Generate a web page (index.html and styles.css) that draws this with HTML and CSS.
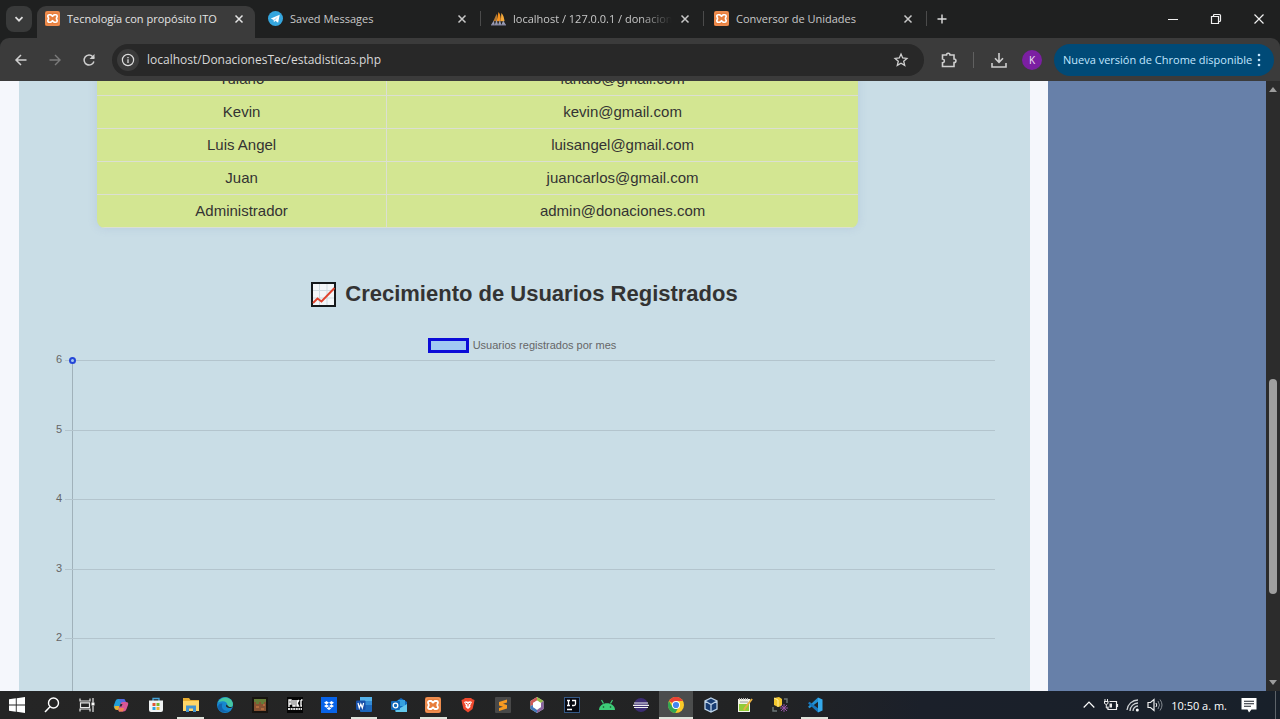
FILE: index.html
```html
<!DOCTYPE html>
<html lang="es">
<head>
<meta charset="utf-8">
<title>Tecnología con propósito ITO</title>
<link rel="stylesheet" href="styles.css">
</head>
<body>
<svg class="defs" aria-hidden="true">
  <symbol id="xampp" viewBox="0 0 16 16">
    <rect width="16" height="16" rx="2" fill="#e87e3c"/>
    <rect x="1" y="1" width="14" height="14" rx="2" fill="none" stroke="#f5a26b" stroke-width=".8"/>
    <path d="M4.500 4h1.700L8 5.500 9.800 4h1.700q1.500 0 1.500 1.500c0 1-.8 1.500-.8 2.500s.8 1.500.8 2.500q0 1.500-1.500 1.500H9.800L8 10.500 6.200 12H4.500Q3 12 3 10.500c0-1 .8-1.500.8-2.500S3 6.500 3 5.500Q3 4 4.500 4z" fill="none" stroke="#fff" stroke-width="1.800"/>
  </symbol>
  <symbol id="close" viewBox="0 0 10 10">
    <path d="M1.500 1.500l7 7M8.500 1.500l-7 7" fill="none" stroke="currentColor" stroke-width="1.500"/>
  </symbol>
</svg>

<header class="tabstrip">
  <button class="tab-search" aria-label="Buscar pestañas"><svg width="10" height="10" viewBox="0 0 10 10"><path d="M1.500 3.200L5 6.700l3.500-3.500" fill="none" stroke="currentColor" stroke-width="1.700"/></svg></button>
  <nav class="tabs">
    <div class="tab tab-active">
      <svg class="favicon"><use href="#xampp"/></svg>
      <span class="tab-title">Tecnología con propósito ITO</span>
      <button class="tab-close" aria-label="Cerrar"><svg width="10" height="10"><use href="#close"/></svg></button>
    </div>
    <div class="tab">
      <svg class="favicon" viewBox="0 0 16 16"><circle cx="8" cy="8" r="8" fill="#35a6de"/><path d="M3 8l9.500-4-1.700 8.500-3-2-1.500 1.500-.3-2.500z" fill="#fff"/><path d="M6 9.500l4.500-3.700-3 4.300z" fill="#a9d3ee"/></svg>
      <span class="tab-title">Saved Messages</span>
      <button class="tab-close" aria-label="Cerrar"><svg width="10" height="10"><use href="#close"/></svg></button>
    </div>
    <div class="tab tab-divided">
      <svg class="favicon" viewBox="0 0 16 16"><path d="M6 11L8 1c2 2 2.500 6 2.500 10z" fill="#f7931e"/><path d="M10.500 11L11 2c2.500 2 3 6 3.500 9z" fill="#f4a93a"/><path d="M2.500 11L6 3c.8 3 .4 6 0 8z" fill="#b7792f"/><path d="M0 15l3-5 1 5 2-6 1.500 6 2-6 1.500 6 2-5 3 5z" fill="#9a9cb4"/><path d="M0 15h16" stroke="#787a94"/></svg>
      <span class="tab-title tab-title-faded">localhost / 127.0.0.1 / donaciones</span>
      <button class="tab-close" aria-label="Cerrar"><svg width="10" height="10"><use href="#close"/></svg></button>
    </div>
    <div class="tab tab-divided">
      <svg class="favicon"><use href="#xampp"/></svg>
      <span class="tab-title">Conversor de Unidades</span>
      <button class="tab-close" aria-label="Cerrar"><svg width="10" height="10"><use href="#close"/></svg></button>
    </div>
    <span class="tabs-end"></span>
  </nav>
  <button class="new-tab" aria-label="Nueva pestaña"><svg width="12" height="12" viewBox="0 0 12 12"><path d="M6 1.500v9M1.500 6h9" stroke="currentColor" stroke-width="1.400"/></svg></button>
  <div class="window-controls">
    <button aria-label="Minimizar"><svg width="12" height="12" viewBox="0 0 12 12"><path d="M1 6.500h10" stroke="currentColor"/></svg></button>
    <button aria-label="Restaurar"><svg width="12" height="12" viewBox="0 0 12 12"><path d="M1.500 3.500h7v7h-7zM3.500 3.500v-1q0-1 1-1h5q1 0 1 1v5q0 1-1 1h-1" fill="none" stroke="currentColor" stroke-width="1.200"/></svg></button>
    <button aria-label="Cerrar"><svg width="12" height="12" viewBox="0 0 12 12"><path d="M1.500 1.500l9 9M10.500 1.500l-9 9" stroke="currentColor" stroke-width="1.200"/></svg></button>
  </div>
</header>

<div class="toolbar">
  <div class="nav-buttons">
    <button aria-label="Atrás"><svg width="16" height="16" viewBox="0 0 16 16"><path d="M13.500 8H3M8 3L3 8l5 5" fill="none" stroke="#cfcfcf" stroke-width="1.500"/></svg></button>
    <button aria-label="Adelante"><svg width="16" height="16" viewBox="0 0 16 16"><path d="M2.500 8H13M8 3l5 5-5 5" fill="none" stroke="#7b7b7b" stroke-width="1.400"/></svg></button>
    <button aria-label="Recargar"><svg width="16" height="16" viewBox="0 0 16 16"><path d="M12.900 9.500A5 5 0 1 1 11.800 4.700L13 6" fill="none" stroke="#cfcfcf" stroke-width="1.500"/><path d="M13.500 2v5h-5z" fill="#cfcfcf"/></svg></button>
  </div>
  <div class="omnibox">
    <button class="site-info" aria-label="Información del sitio"><svg width="14" height="14" viewBox="0 0 14 14"><circle cx="7" cy="7" r="5.600" fill="none" stroke="currentColor" stroke-width="1.200"/><path d="M7 6.300v3.700M7 4v1.300" stroke="currentColor" stroke-width="1.300"/></svg></button>
    <input class="url" type="text" aria-label="Dirección" value="localhost/DonacionesTec/estadisticas.php">
    <button class="star" aria-label="Añadir a marcadores"><svg width="16" height="16" viewBox="0 0 16 16"><path d="M8 2.100l1.700 3.900 4.200.4-3.200 2.800 1 4.200L8 11.200l-3.700 2.200 1-4.200L2.100 6.400l4.200-.4z" fill="none" stroke="#d0d0d0" stroke-width="1.300"/></svg></button>
  </div>
  <button class="tool" aria-label="Extensiones"><svg width="18" height="18" viewBox="0 0 18 18"><path d="M2.500 4h4c0-2.400 3.500-2.400 3.500 0h4v4c2.600 0 2.600 3.500 0 3.500v4H2.500v-3.700c2.500-.3 2.500-3.500 0-3.800z" fill="none" stroke="#cfcfcf" stroke-width="1.600"/></svg></button>
  <span class="tool-divider"></span>
  <button class="tool" aria-label="Descargas"><svg width="18" height="18" viewBox="0 0 18 18"><path d="M9 2v9M5 7.300l4 4 4-4M2 12v4h14v-4" fill="none" stroke="#cfcfcf" stroke-width="1.600"/></svg></button>
  <button class="avatar" aria-label="Perfil">K</button>
  <button class="update">Nueva versión de Chrome disponible<svg width="4" height="14" viewBox="0 0 4 14"><g fill="currentColor"><circle cx="2" cy="2" r="1.300"/><circle cx="2" cy="7" r="1.300"/><circle cx="2" cy="12" r="1.300"/></g></svg></button>
</div>

<div class="viewport">
  <div class="page">
    <main class="content">
      <table class="users">
        <tbody>
          <tr><td>Tulano</td><td>fanalo@gmail.com</td></tr>
          <tr><td>Kevin</td><td>kevin@gmail.com</td></tr>
          <tr><td>Luis Angel</td><td>luisangel@gmail.com</td></tr>
          <tr><td>Juan</td><td>juancarlos@gmail.com</td></tr>
          <tr><td>Administrador</td><td>admin@donaciones.com</td></tr>
        </tbody>
      </table>
      <h2 class="heading">
        <svg width="25" height="25" viewBox="0 0 25 25" aria-hidden="true"><rect x="1" y="1" width="23" height="23" fill="#f3f6f8" stroke="#15191b" stroke-width="2"/><path d="M8.500 2v21M16 2v21M2 8.500h21M2 16h21" stroke="#cfdbe1"/><path d="M2 21l4.500-4.500 4 3L23.500 6" fill="none" stroke="#e0442e" stroke-width="2"/></svg>
        Crecimiento de Usuarios Registrados
      </h2>
      <figure class="chart">
        <figcaption class="legend"><span class="swatch"></span>Usuarios registrados por mes</figcaption>
        <div class="plot">
          <ol class="ticks">
            <li><span>6</span></li>
            <li><span>5</span></li>
            <li><span>4</span></li>
            <li><span>3</span></li>
            <li><span>2</span></li>
          </ol>
          <span class="point"></span>
        </div>
      </figure>
    </main>
    <aside class="side"></aside>
  </div>
  <div class="scrollbar">
    <svg width="8" height="5" viewBox="0 0 8 5"><path d="M0 5l4-5 4 5z" fill="#9d9d9d"/></svg>
    <div class="track"><div class="thumb"></div></div>
    <svg width="8" height="5" viewBox="0 0 8 5"><path d="M0 0l4 5 4-5z" fill="#9d9d9d"/></svg>
  </div>
</div>

<footer class="taskbar">
  <div class="apps">
    <button aria-label="Inicio"><svg viewBox="0 0 16 16"><path d="M0 2.300l6.800-1v6.300H0zM7.700 1.200L16 0v7.600H7.700zM0 8.400h6.800v6.300l-6.800-1zM7.700 8.400H16V16l-8.300-1.200z" fill="#fff"/></svg></button>
    <button aria-label="Buscar"><svg viewBox="0 0 16 16"><circle cx="9.500" cy="6" r="5" fill="none" stroke="#fff" stroke-width="1.400"/><path d="M6 9.700L1 15" stroke="#fff" stroke-width="1.500"/></svg></button>
    <button aria-label="Vista de tareas"><svg viewBox="0 0 16 16"><path d="M1 1.500v2.500h10V1.500M1.500 5.800h9v4.700h-9zM1 14.500V12h10v2.500M14 1v4.500M14 9v6" fill="none" stroke="#e8e8e8" stroke-width="1.200"/><path d="M12.500 5.500h3v3h-3z" fill="#fff"/></svg></button>
    <button aria-label="Copilot"><svg viewBox="0 0 16 16"><path d="M5 2h5q2 0 2 2l1 2H8L6 12H3q-3-1-2-4l1.500-4q.7-2 2.500-2z" fill="#239ed6"/><path d="M6 2h4.500q1.500 0 2 2L13 6H9q-1.500 0-2-1.500z" fill="#5368df"/><path d="M1.500 9h5l-1 4H4q-3 0-2.500-4z" fill="#e5b333"/><path d="M13 5q3 0 2 3l-1.500 4q-.8 2.500-3 2.500H6q-1-1-.2-3L8 6q.5-1 2-1z" fill="#d95696"/><path d="M6 11h5l-1 3.500H6q-1-1 0-3.500z" fill="#ee8353"/><path d="M7.500 7h2L8.500 9.500h-2z" fill="#272a35"/></svg></button>
    <button aria-label="Microsoft Store"><svg viewBox="0 0 16 16"><path d="M5 4V1.500h6V4" fill="none" stroke="#46a5d9" stroke-width="1.300"/><path d="M1 3.500h14V13q0 2-2 2H3q-2 0-2-2z" fill="#f0f3f4"/><path d="M4.500 6h3v3h-3z" fill="#e05537"/><path d="M8.500 6h3v3h-3z" fill="#79b530"/><path d="M4.500 10h3v3h-3z" fill="#2da2dd"/><path d="M8.500 10h3v3h-3z" fill="#eeb52d"/></svg></button>
    <button class="open" aria-label="Explorador"><svg viewBox="0 0 16 16"><path d="M0 1h6l1.500 2H16v4H0z" fill="#e8ad31"/><path d="M0 4h16v10H0z" fill="#ffd668"/><path d="M3 15V8.500h10V15h-3v-3.500H6V15z" fill="#4494d0"/></svg></button>
    <button aria-label="Edge"><svg viewBox="0 0 16 16"><circle cx="8" cy="8" r="8" fill="#1688cf"/><path d="M1 5.500C4-2 15-1 16 7c0 4-5 4.500-6.500 3C12 7 9 4 5.500 4.200 3 4.300 1.500 5 1 5.500z" fill="#45c7a3"/><path d="M5.500 6.500c-2 4 1 8.500 7.500 7C7 17 1 14.500 1 10c0-2.500 2-4 4.500-3.500z" fill="#1264ad"/><path d="M9.500 10c-1-1-.3-2 .2-2.500 1.500 2 3 3.500 5.800 2-.8 1.500-4 2.500-6 .5z" fill="#202428"/></svg></button>
    <button aria-label="Minecraft"><svg viewBox="0 0 16 16"><rect width="16" height="16" fill="#17130f"/><rect x="2" y="2" width="12" height="12" fill="#875333"/><path d="M2 2h12v3h-2v2h-3V5H7v2H4V5H2z" fill="#657c38"/><path d="M4 9h3v2H4zM9 11h3v2H9zM11 7h2v2h-2z" fill="#b26a3c"/></svg></button>
    <button aria-label="PUBG"><svg viewBox="0 0 16 16"><rect width="16" height="16" fill="#050505"/><path d="M2 10V3h2v4H2M6 3v6h2V3M10 3v6h1.500L10 6l2-3M14 3v6h1M14 3h1.500" fill="none" stroke="#fff" stroke-width="1.400"/><path d="M1 12h14" stroke="#ddd" stroke-width="1.800" stroke-dasharray="2 .6"/></svg></button>
    <button aria-label="Dropbox"><svg viewBox="0 0 16 16"><rect width="16" height="16" fill="#0863e8"/><path d="M5.500 4L8 5.700 5.500 7.400 3 5.700zM10.500 4L13 5.700l-2.500 1.700L8 5.700zM5.500 7.400L8 9.100l-2.500 1.700L3 9.100zM10.500 7.400L13 9.100l-2.500 1.700L8 9.100zM8 10l2.300 1.500L8 13l-2.300-1.500z" fill="#fff"/></svg></button>
    <button class="open" aria-label="Word"><svg viewBox="0 0 16 16"><rect x="4" width="12" height="15" rx="1" fill="#1c67bd"/><path d="M4 0h12v4H4z" fill="#55b1e8"/><path d="M4 4h12v4H4z" fill="#338bd5"/><rect y="3.500" width="9.500" height="9.500" rx="1" fill="#174fa8"/><path d="M2 6l1.300 5L4.800 7l1.500 4L7.600 6" fill="none" stroke="#fff" stroke-width="1.200"/></svg></button>
    <button aria-label="Outlook"><svg viewBox="0 0 16 16"><path d="M4 5l6-4 6 4v9H4z" fill="#126bc0"/><path d="M7 3h7v6H7z" fill="#35a1df"/><path d="M4 14L16 7v8H5z" fill="#63c8ec"/><rect y="4" width="9" height="9" rx="1" fill="#1169b9"/><circle cx="4.500" cy="8.500" r="2.300" fill="none" stroke="#fff" stroke-width="1.300"/></svg></button>
    <button class="open" aria-label="XAMPP"><svg><use href="#xampp"/></svg></button>
    <button aria-label="Brave"><svg viewBox="0 0 16 16"><path d="M5 1h6l1.500 1.200 2 .8L14 6l-1.500 6L8 15.500 3.500 12 2 6l-.5-3 2-.8z" fill="#f0492e"/><path d="M4 5l2-.8 2 .5 2-.5 2 .8-1.800 3.500.3 1.500L8 12l-2.500-2 .3-1.500z" fill="#fff"/><path d="M5.500 6l2 1M10.500 6l-2 1M8 7v2.500" stroke="#f0492e"/></svg></button>
    <button aria-label="Sublime Text"><svg viewBox="0 0 16 16"><rect width="16" height="16" rx="1" fill="#484848"/><path d="M12 2.500v3L8 6.800l4 1.200v3.500L4 14v-3l4-1.300L4 8.400V5z" fill="#f89a21"/></svg></button>
    <button aria-label="NetBeans"><svg viewBox="0 0 16 16"><path d="M8 0l6.500 4v8L8 16l-6.500-4V4z" fill="#cfd5d6"/><path d="M8 0l6.500 4-2.500 2-4-2.500z" fill="#98bc48"/><path d="M8 0L1.500 4v5L4 8V6l4-2.500z" fill="#cf5b58"/><path d="M1.500 9v3L8 16v-3L4 10V8z" fill="#4478b9"/><path d="M14.500 4v8L8 16v-3l4-3V6z" fill="#8a639f"/><path d="M4 6l4-2.500L12 6v4l-4 2.500L4 10z" fill="#fff"/></svg></button>
    <button aria-label="IntelliJ IDEA"><svg viewBox="0 0 16 16"><rect x=".5" y=".5" width="15" height="15" fill="#070912" stroke="#355986"/><path d="M3 3.500h3M4.500 3.500v5M3 8.500h3M8 3.500h3.500V7q0 1.500-1.500 1.500H8M3 12.500h5" fill="none" stroke="#fff" stroke-width="1.300"/></svg></button>
    <button aria-label="Android Studio"><svg viewBox="0 0 16 16"><path d="M0 13c0-9 16-9 16 0z" fill="#3dce78"/><path d="M2.500 3l2 3.500M13.500 3l-2 3.500" stroke="#3dce78" stroke-width="1.200"/><circle cx="4.500" cy="10" r=".8" fill="#17452b"/><circle cx="11.500" cy="10" r=".8" fill="#17452b"/></svg></button>
    <button aria-label="Eclipse"><svg viewBox="0 0 16 16"><circle cx="8" cy="8" r="7" fill="#3b2c72"/><path d="M1 6h14M0 8.300h16M1 10.500h14" stroke="#eee" stroke-width="1.200"/></svg></button>
    <button class="open current" aria-label="Chrome"><svg viewBox="0 0 16 16"><circle cx="8" cy="8" r="8" fill="#f9c928"/><path d="M8 8L1 4A8 8 0 0 1 15 4H8z" fill="#e94335"/><path d="M1 4a8 8 0 0 0 6.300 12L11 9.500 8 8 4.500 10z" fill="#32a653"/><circle cx="8" cy="8" r="4" fill="#fff"/><circle cx="8" cy="8" r="3.100" fill="#4385ef"/></svg></button>
    <button aria-label="VirtualBox"><svg viewBox="0 0 16 16"><path d="M8 1l6 3v8l-6 3-6-3V4z" fill="#173c73"/><path d="M8 1l6 3v8l-6 3-6-3V4zM2 4l6 3.500L14 4M8 7.500V15" fill="none" stroke="#bdd3e9" stroke-width="1.300"/></svg></button>
    <button aria-label="Notepad++"><svg viewBox="0 0 16 16"><path d="M1 2h12v13H1z" fill="#f4f5e9"/><path d="M2 7h10v7H2z" fill="#91cb38"/><path d="M2 2h10" stroke="#bbb" stroke-width="2" stroke-dasharray="1"/><path d="M3 5h8" stroke="#999"/><path d="M15 2l-7 9-1 2" fill="none" stroke="#e6af42" stroke-width="2"/></svg></button>
    <button aria-label="SQL Developer"><svg viewBox="0 0 16 16"><path d="M2 1l5-1 3 2v7l-4 1-4-2z" fill="#f3c72e"/><path d="M2 1l4 2v7" fill="none" stroke="#fff0a0"/><path d="M12 2h3v4M1 10v4h4" fill="none" stroke="#6d7777" stroke-width="1.400"/><path d="M9 8l6 6M15 8l-6 6M12 7v8M8 11h8" stroke="#9553a4"/></svg></button>
    <button class="open" aria-label="Visual Studio Code"><svg viewBox="0 0 16 16"><path d="M11 .5L1 9.700l1.500 1.500L11 4.800z" fill="#2191d4"/><path d="M11 15.500L1 6.300l1.500-1.500L11 11.200z" fill="#1676bd"/><path d="M11 .5L15.500 2.500v11L11 15.500z" fill="#34a9eb"/></svg></button>
  </div>
  <div class="tray">
    <button aria-label="Mostrar iconos ocultos"><svg width="12" height="12" viewBox="0 0 12 12"><path d="M.7 8.500L6 3.200l5.300 5.300" fill="none" stroke="#fff" stroke-width="1.200"/></svg></button>
    <button aria-label="Batería"><svg width="16" height="14" viewBox="0 0 16 14"><path d="M6.500 3.500h7v8H5v-3M14.500 6v3" fill="none" stroke="#eee" stroke-width="1.200"/><path d="M2 1v2M4.500 1v2M1 3.500h4.500M1.500 4v1.500q1.700 2 3.500 0V4M3.300 6.500V10H5" fill="none" stroke="#eee"/><path d="M6.500 5.500H9v4H6.500z" fill="#eee"/></svg></button>
    <button aria-label="Red"><svg width="14" height="14" viewBox="0 0 14 14"><path d="M1 12A11 11 0 0 1 12 2M4 13a8 8 0 0 1 8-8M7 13a5 5 0 0 1 5-5" fill="none" stroke="#cfd2d5" stroke-width="1.300"/><circle cx="11.300" cy="12" r="1.500" fill="#fff"/></svg></button>
    <button aria-label="Volumen"><svg width="16" height="14" viewBox="0 0 16 14"><path d="M1 4.500h2.500L7 1.500v11L3.500 9.500H1z" fill="none" stroke="#eee" stroke-width="1.200"/><path d="M9 5q1.500 2 0 4" fill="none" stroke="#eee"/><path d="M11 3q3 4 0 8M13 1.500q4 5.500 0 11" fill="none" stroke="#858b91"/></svg></button>
    <time class="clock">10:50 a. m.</time>
    <button aria-label="Notificaciones"><svg width="16" height="16" viewBox="0 0 16 16"><path d="M.5 1h15v11.500h-5L8 15.500l-1.500-3h-6z" fill="#fff"/><path d="M3 4.300h10M3 6.800h10M3 9.300h7" stroke="#1c222b" stroke-width="1.100"/></svg></button>
    <span class="desktop-edge"></span>
  </div>
</footer>
</body>
</html>
```
FILE: styles.css
```css
* { box-sizing: border-box; }

body {
  margin: 0;
  height: 100vh;
  display: flex;
  flex-direction: column;
  overflow: hidden;
  background: #1f2020;
  font-family: "Open Sans", "Noto Sans", sans-serif;
  font-size: 11px;
  color: #dedede;
}

button {
  display: flex;
  align-items: center;
  justify-content: center;
  padding: 0;
  border: 0;
  background: none;
  color: inherit;
  font: inherit;
}

svg { display: block; flex: none; }
.defs { position: absolute; width: 0; height: 0; }

/* Tab strip */
.tabstrip {
  flex: none;
  height: 38px;
  display: flex;
  align-items: center;
  padding-left: 6px;
}
.tab-search {
  width: 26px;
  height: 26px;
  border-radius: 8px;
  background: #393a3a;
}
.tabs {
  display: flex;
  gap: 5px;
  align-self: stretch;
  padding: 6px 0 0 5px;
}
.tab {
  position: relative;
  width: 218px;
  display: flex;
  align-items: center;
  gap: 7px;
  padding: 0 10px 7px 8px;
  color: #c8c8c8;
}
.tab-active {
  background: #3b3b3b;
  border-radius: 9px 9px 0 0;
  color: #e4e4e4;
}
.tab-divided::before {
  content: "";
  position: absolute;
  left: -3px;
  top: 5px;
  width: 1px;
  height: 15px;
  background: #4b4b4b;
}
.tabs-end {
  width: 1px;
  height: 15px;
  margin: 5px 0 0 -3px;
  background: #4b4b4b;
}
.favicon { width: 15px; height: 15px; }
.tab-title {
  flex: 1;
  min-width: 0;
  overflow: hidden;
  white-space: nowrap;
}
.tab-title-faded { mask-image: linear-gradient(to right, #000 80%, transparent); }
.tab-close { width: 12px; height: 16px; }
.new-tab { width: 26px; height: 26px; margin-left: 2px; }
.window-controls { display: flex; margin-left: auto; }
.window-controls button { width: 43px; height: 38px; color: #f0f0f0; }

/* Toolbar */
.toolbar {
  flex: none;
  height: 43px;
  display: flex;
  align-items: center;
  padding: 0 6px 0 4px;
  background: #3b3b3b;
  border-radius: 9px 9px 0 0;
}
.nav-buttons { display: flex; margin-right: 6px; }
.nav-buttons button { width: 34px; height: 32px; }
.omnibox {
  flex: 1;
  height: 32px;
  display: flex;
  align-items: center;
  padding: 0 15px 0 5px;
  margin-right: 8px;
  border-radius: 16px;
  background: #282828;
}
.site-info {
  width: 22px;
  height: 22px;
  border-radius: 50%;
  background: #3b3b3b;
}
.url {
  flex: 1;
  min-width: 0;
  padding: 0;
  margin-left: 8px;
  border: 0;
  outline: 0;
  background: none;
  color: #d8d8d8;
  font: inherit;
  font-size: 12px;
}
.tool { width: 34px; height: 32px; }
.tool-divider { width: 1px; height: 16px; margin: 0 8px 0 7px; background: #606060; }
.avatar {
  width: 20px;
  height: 20px;
  margin: 0 12px 0 6px;
  border-radius: 50%;
  background: #7b1fa2;
  color: #f2e4f6;
  font-size: 10px;
}
.update {
  width: 220px;
  height: 32px;
  justify-content: space-between;
  padding: 0 13px 0 9px;
  border-radius: 16px;
  background: #004a77;
  color: #c2e7ff;
  white-space: nowrap;
}

/* Web page */
.viewport {
  flex: 1;
  min-height: 0;
  display: flex;
  overflow: hidden;
  background: #f5f7fc;
}
.page {
  flex: 1;
  display: flex;
  gap: 18px;
  padding-left: 19px;
  font-family: "Liberation Sans", Arial, sans-serif;
  color: #333;
}
.content {
  flex: 1;
  overflow: hidden;
  background: #c9dde6;
}
.side { width: 218px; background: #6780a9; }
.users {
  width: 761px;
  margin: -18px 0 0 78px;
  table-layout: fixed;
  border-collapse: separate;
  border-spacing: 0;
  border-radius: 8px;
  overflow: hidden;
  background: #d3e692;
  box-shadow: 0 0 10px rgba(110, 135, 190, 0.2);
  font-size: 15px;
  line-height: 20px;
  text-align: center;
}
.users td {
  padding: 6px;
  border-bottom: 1px solid #dbdfd2;
}
.users td:first-child { width: 38%; }
.users td + td { border-left: 1px solid #dbdfd2; }
.heading {
  display: flex;
  align-items: center;
  justify-content: center;
  gap: 9px;
  margin: 52px 0 0;
  font-size: 22px;
  line-height: 28px;
}
.chart { margin: 28px 35px 0 30px; color: #666; font-size: 11px; }
.legend {
  display: flex;
  align-items: center;
  justify-content: center;
  gap: 4px;
  height: 18px;
}
.swatch {
  width: 41px;
  height: 15px;
  border: 3px solid #0b0bd8;
  background: #a0c9f3;
}
.plot { position: relative; padding-top: 6px; }
.ticks {
  display: grid;
  grid-template-rows: repeat(5, 1fr);
  height: 348px;
  margin: 0;
  padding: 0;
  list-style: none;
}
.ticks li {
  display: flex;
  gap: 3px;
  line-height: 14px;
}
.ticks span { width: 13px; margin-top: -8px; text-align: right; }
.ticks li::after {
  content: "";
  flex: 1;
  border-top: 1px solid #b3c4cd;
  background: linear-gradient(#a0b1ba, #a0b1ba) 7px 0 / 1px 100% no-repeat;
}
.point {
  position: absolute;
  left: 20px;
  top: 3px;
  width: 7px;
  height: 7px;
  border: 2px solid #2546d8;
  border-radius: 50%;
  background: #a5c9f2;
}

/* Scrollbar */
.scrollbar {
  width: 14px;
  display: flex;
  flex-direction: column;
  align-items: center;
  padding: 6px 0;
  background: #2c2c2c;
}
.track { flex: 1; width: 8px; padding-top: 287px; }
.thumb { height: 215px; border-radius: 4px; background: #9f9f9f; }

/* Taskbar */
.taskbar {
  flex: none;
  height: 28px;
  display: flex;
  justify-content: space-between;
  background: linear-gradient(to right, #252525 0, #222324 60%, #1b202a 72%, #18202a);
}
.apps {
  width: 65%;
  display: grid;
  grid-template-columns: repeat(24, 1fr);
}
.apps button { position: relative; }
.apps svg { width: 16px; height: 16px; }
.apps .open::after {
  content: "";
  position: absolute;
  left: 4px;
  right: 4px;
  bottom: 0;
  height: 2px;
  background: #dde3da;
}
.apps .current { background: #4b4d4d; }
.apps .current::after { left: 0; right: 0; }
.tray { display: flex; align-items: center; color: #fff; }
.tray button { width: 22px; height: 28px; }
.clock { margin: 0 11px 0 5px; white-space: nowrap; }
.desktop-edge { width: 1px; height: 28px; margin: 0 4px 0 15px; background: #5d6369; }
```
